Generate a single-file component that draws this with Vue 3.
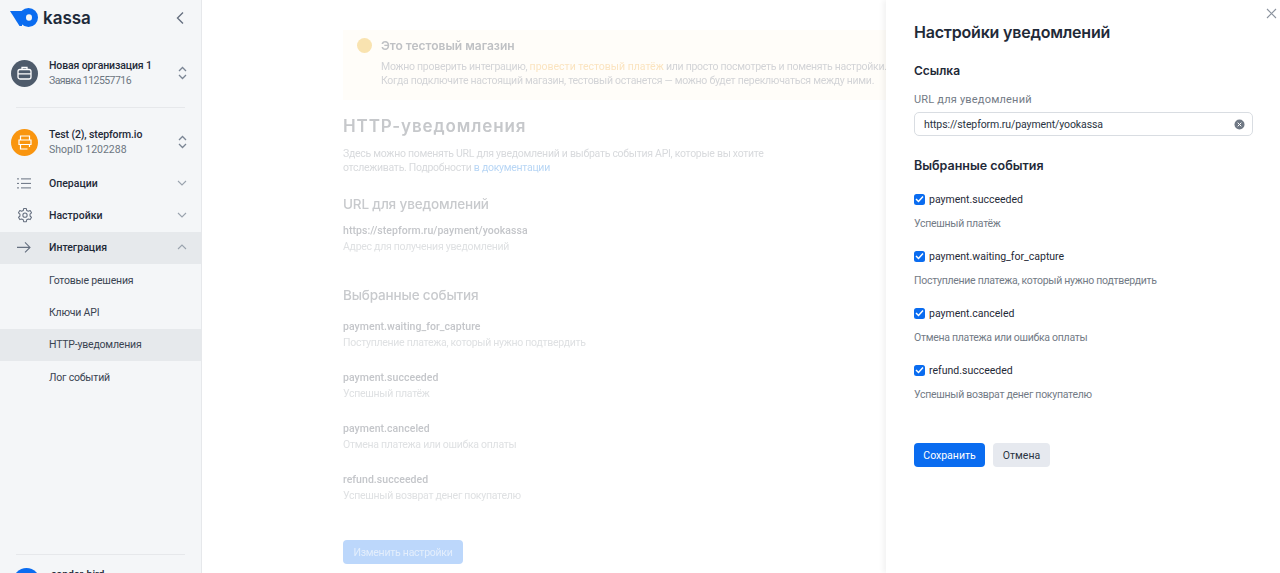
<script setup>
const nav = [
  { label: 'Готовые решения' },
  { label: 'Ключи API' },
  { label: 'HTTP-уведомления', active: true },
  { label: 'Лог событий' },
]
const mainEvents = [
  { name: 'payment.waiting_for_capture', desc: 'Поступление платежа, который нужно подтвердить' },
  { name: 'payment.succeeded', desc: 'Успешный платёж' },
  { name: 'payment.canceled', desc: 'Отмена платежа или ошибка оплаты' },
  { name: 'refund.succeeded', desc: 'Успешный возврат денег покупателю' },
]
const panelEvents = [
  { name: 'payment.succeeded', desc: 'Успешный платёж' },
  { name: 'payment.waiting_for_capture', desc: 'Поступление платежа, который нужно подтвердить' },
  { name: 'payment.canceled', desc: 'Отмена платежа или ошибка оплаты' },
  { name: 'refund.succeeded', desc: 'Успешный возврат денег покупателю' },
]
</script>

<template>
  <div class="app">
    <aside class="sidebar">
      <div class="logo-row">
        <svg class="logo" width="28" height="19" viewBox="0 0 28 19">
          <path d="M0 3h12v15h-2.500z" fill="#0a6cf0" />
          <path fill-rule="evenodd" d="M18.500 0a9.500 9.500 0 1 1 0 19 9.500 9.500 0 0 1 0-19zm.500 6.300a3 3.200 0 1 0 0 6.400 3 3.200 0 0 0 0-6.400z" fill="#0a6cf0" />
        </svg>
        <span class="logo-text">kassa</span>
        <svg class="collapse" width="10" height="14" viewBox="0 0 10 14"><path d="M8 1.500 2.500 7 8 12.500" fill="none" stroke="#667080" stroke-width="1.400" /></svg>
      </div>

      <div class="account org">
        <span class="avatar dark">
          <svg width="15" height="14" viewBox="0 0 15 14" fill="none" stroke="#fff" stroke-width="1.300"><rect x="1" y="3.500" width="13" height="9.500" rx="2" /><path d="M5 3.500V1.500h5v2M1 7.800h13" /></svg>
        </span>
        <div class="account-text">
          <div class="account-name">Новая организация 1</div>
          <div class="account-sub request">Заявка 112557716</div>
        </div>
        <svg class="updown" width="9" height="14" viewBox="0 0 9 14" fill="none" stroke="#7a8594" stroke-width="1.300"><path d="M1 5 4.500 1.500 8 5M1 9l3.500 3.500L8 9" /></svg>
      </div>
      <div class="divider"></div>
      <div class="account shop">
        <span class="avatar orange">
          <svg width="14" height="15" viewBox="0 0 14 15" fill="none" stroke="#fff" stroke-width="1.200"><path d="M2.500 1h9v4h-9zM1 5h12v4.500H1zM2.500 9.500V14h7M11.500 9.500V12" /></svg>
        </span>
        <div class="account-text">
          <div class="account-name">Test (2), stepform.io</div>
          <div class="account-sub">ShopID 1202288</div>
        </div>
        <svg class="updown" width="9" height="14" viewBox="0 0 9 14" fill="none" stroke="#7a8594" stroke-width="1.300"><path d="M1 5 4.500 1.500 8 5M1 9l3.500 3.500L8 9" /></svg>
      </div>

      <nav class="nav">
        <div class="nav-item">
          <svg class="nav-icon" width="14" height="12" viewBox="0 0 14 12" fill="none" stroke="#667080" stroke-width="1"><path d="M0 1.500h2M4 1.500h10M0 6h2M4 6h10M0 10.500h2M4 10.500h10" /></svg>
          <span>Операции</span>
          <svg class="chev" width="10" height="6" viewBox="0 0 10 6" fill="none" stroke="#9aa3ae" stroke-width="1.100"><path d="m1 1 4 4 4-4" /></svg>
        </div>
        <div class="nav-item">
          <svg class="nav-icon" width="16" height="16" viewBox="0 0 24 24" fill="none" stroke="#667080" stroke-width="1.600"><circle cx="12" cy="12" r="3.200" /><path d="M10 2h4l.6 3 2.400 1.200 2.800-1.200 2 3.400-2.300 2 .1 2.800 2.200 2-2 3.400-2.800-1-2.400 1.200-.6 3h-4l-.6-3L7 17.600l-2.800 1-2-3.400 2.200-2V10.400l-2.200-2 2-3.400 2.800 1.200L9.400 5z" stroke-linejoin="round" /></svg>
          <span>Настройки</span>
          <svg class="chev" width="10" height="6" viewBox="0 0 10 6" fill="none" stroke="#9aa3ae" stroke-width="1.100"><path d="m1 1 4 4 4-4" /></svg>
        </div>
        <div class="nav-item open">
          <svg class="nav-icon" width="14" height="12" viewBox="0 0 14 12" fill="none" stroke="#667080" stroke-width="1.100"><path d="M0 6h13M8 1l5 5-5 5" /></svg>
          <span>Интеграция</span>
          <svg class="chev" width="10" height="6" viewBox="0 0 10 6" fill="none" stroke="#9aa3ae" stroke-width="1.100"><path d="m1 5 4-4 4 4" /></svg>
        </div>
        <div v-for="n in nav" :key="n.label" class="sub-item" :class="{ active: n.active }">{{ n.label }}</div>
      </nav>

      <div class="side-bottom">
        <div class="divider"></div>
        <div class="user">
          <span class="avatar blue"></span>
          <span class="account-name">condor-bird</span>
        </div>
      </div>
    </aside>

    <main class="main">
      <div class="content">
        <section class="banner">
          <span class="banner-dot"></span>
          <div class="banner-body">
            <div class="banner-title">Это тестовый магазин</div>
            <p>Можно проверить интеграцию, <span class="orange-link">провести тестовый платёж</span> или просто посмотреть и поменять настройки.</p>
            <p>Когда подключите настоящий магазин, тестовый останется — можно будет переключаться между ними.</p>
          </div>
        </section>
        <h1>HTTP-уведомления</h1>
        <p class="intro">Здесь можно поменять URL для уведомлений и выбрать события API, которые вы хотите отслеживать. Подробности <span class="blue-link">в документации</span></p>
        <h2 class="url-head">URL для уведомлений</h2>
        <div class="field">
          <div class="f-name">https://stepform.ru/payment/yookassa</div>
          <div class="f-desc">Адрес для получения уведомлений</div>
        </div>
        <h2 class="ev-head">Выбранные события</h2>
        <div v-for="e in mainEvents" :key="e.name" class="field ev">
          <div class="f-name">{{ e.name }}</div>
          <div class="f-desc">{{ e.desc }}</div>
        </div>
        <button class="edit-btn">Изменить настройки</button>
      </div>
    </main>

    <section class="panel">
      <svg class="close" width="11" height="11" viewBox="0 0 11 11" fill="none" stroke="#8b939e" stroke-width="1.100"><path d="m1 1 9 9M10 1l-9 9" /></svg>
      <h3 class="panel-title">Настройки уведомлений</h3>
      <h4 class="link-head">Ссылка</h4>
      <label class="input-label">URL для уведомлений</label>
      <div class="input">
        <span>https://stepform.ru/payment/yookassa</span>
        <svg width="11" height="11" viewBox="0 0 11 11"><circle cx="5.500" cy="5.500" r="5" fill="#6f7884" /><path d="m3.700 3.700 3.600 3.600m0-3.600L3.700 7.300" stroke="#fff" stroke-width="1" /></svg>
      </div>
      <h4 class="events-head">Выбранные события</h4>
      <div v-for="e in panelEvents" :key="e.name" class="check-block">
        <div class="check-row">
          <span class="box">
            <svg width="9" height="8" viewBox="0 0 9 8" fill="none" stroke="#fff" stroke-width="1.500"><path d="m1 4 2.500 2.500L8 1.500" /></svg>
          </span>
          <span class="check-name">{{ e.name }}</span>
        </div>
        <div class="check-desc">{{ e.desc }}</div>
      </div>
      <div class="actions">
        <button class="btn primary">Сохранить</button>
        <button class="btn secondary">Отмена</button>
      </div>
    </section>
  </div>
</template>

<style>
html, body { margin: 0; overflow: hidden; background: #fff; }
</style>

<style scoped>
.app {
  display: flex;
  width: 1280px;
  height: 573px;
  overflow: hidden;
  font-family: Roboto, "Noto Sans", sans-serif;
  font-size: 10.500px;
  color: #1f2a38;
  background: #fff;
}
* { box-sizing: border-box; }
h1, h2, h3, h4, p { margin: 0; }

.sidebar {
  width: 202px;
  flex: none;
  height: 573px;
  background: #f4f6f8;
  border-right: 1px solid #e6e8eb;
  display: flex;
  flex-direction: column;
  overflow: hidden;
}
.logo-row { display: flex; align-items: center; height: 35px; padding: 0 16px 0 10px; }
.logo-text { font-family: Inter, sans-serif; font-size: 17px; font-weight: 600; color: #1d2a3a; margin-left: 5px; }
.collapse { margin-left: auto; }
.account { display: flex; align-items: center; padding: 0 14px 0 11px; height: 28px; }
.org { margin-top: 24px; }
.shop { margin-top: 20px; }
.avatar { width: 27px; height: 27px; border-radius: 50%; flex: none; display: flex; align-items: center; justify-content: center; }
.dark { background: #4e5b6b; }
.orange { background: #f9950f; }
.blue { background: #0a6cf0; }
.account-text { margin-left: 11px; flex: 1; padding-top: 1px; }
.account-name { font-size: 10.500px; font-weight: 500; line-height: 14px; color: #1f2a38; letter-spacing: -.12px; }
.account-sub { font-size: 10.500px; line-height: 16px; color: #6d7682; }
.request { letter-spacing: -.55px; }
.divider { height: 1px; background: #e6e8eb; margin: 0 16px; }
.org + .divider { margin-top: 20px; }

.nav { margin-top: 12px; }
.nav-item { position: relative; display: flex; align-items: center; height: 32px; padding: 0 14px 2px 49px; font-weight: 500; }
.nav-item .chev { margin-left: auto; }
.nav-icon { position: absolute; left: 17px; top: 50%; transform: translateY(-55%); }
.open { background: #e6e9ec; }
.sub-item { height: 32.300px; display: flex; align-items: center; padding-left: 49px; color: #3a4452; letter-spacing: -.2px; }
.sub-item.active { background: #e6e9ec; }

.side-bottom { margin-top: auto; height: 19px; flex: none; }
.user { display: flex; align-items: flex-start; gap: 11px; padding: 13px 0 0 13px; height: 40px; }

.main { flex: 1; min-width: 0; overflow: hidden; position: relative; }
.content { padding: 30px 0 0 141px; width: 760px; color: #c5c8cc; filter: blur(.5px); }
.banner { display: flex; width: 640px; padding: 8px 0 0 14px; height: 70px; background: #fffdf9; white-space: nowrap; }
.banner-dot { width: 15px; height: 15px; border-radius: 50%; background: #f9e3b0; flex: none; margin-right: 9px; }
.banner-title { font-family: Inter, sans-serif; font-size: 12px; font-weight: 600; line-height: 16px; color: #bfc1c4; margin-bottom: 6px; }
.banner-body p { line-height: 14px; color: #d3d4d7; letter-spacing: -.28px; }
.orange-link { color: #fbe4c0; letter-spacing: 0; }
h1 { font-family: Inter, sans-serif; font-size: 17px; font-weight: 600; letter-spacing: .9px; line-height: 24px; margin-top: 14px; color: #c6c8cb; }
.intro { width: 430px; margin-top: 9px; line-height: 14px; color: #d8dadd; letter-spacing: -.28px; }
.blue-link { color: #b8d6f5; }
.url-head { font-family: Inter, sans-serif; font-size: 13.500px; font-weight: 500; letter-spacing: -.15px; line-height: 20px; margin-top: 19px; color: #c8cacd; }
.field { margin-top: 9px; }
.f-name { font-weight: 500; line-height: 16px; color: #c4c6ca; letter-spacing: .05px; }
.f-desc { line-height: 15px; color: #dfe1e3; letter-spacing: -.28px; }
.ev-head { font-family: Inter, sans-serif; font-size: 13.500px; font-weight: 500; letter-spacing: -.15px; line-height: 20px; margin-top: 31px; color: #c8cacd; }
.ev { margin-top: 20px; }
.ev-head + .ev { margin-top: 14px; }
.edit-btn { display: block; margin-top: 37px; width: 120px; height: 24px; border: 0; border-radius: 4px; background: #bcd7fb; color: #e3eefc; font: inherit; letter-spacing: -.25px; white-space: nowrap; padding: 0; }

.panel {
  position: relative;
  width: 394px;
  flex: none;
  height: 573px;
  padding: 21px 28px 0;
  background: #fff;
  box-shadow: -3px 0 5px rgba(0, 0, 0, .05);
}
.close { position: absolute; top: 8px; right: 3px; }
.panel-title { font-family: Inter, sans-serif; font-size: 16px; font-weight: 600; letter-spacing: -.2px; line-height: 22px; color: #1f2a38; }
.link-head { font-family: Inter, sans-serif; font-size: 12px; font-weight: 600; line-height: 16px; margin-top: 20px; }
.input-label { display: block; margin-top: 13px; font-size: 11px; letter-spacing: .2px; line-height: 16px; color: #737b86; }
.input { display: flex; align-items: center; justify-content: space-between; width: 339px; height: 24px; margin-top: 4px; padding: 0 7px 0 9px; border: 1px solid #d9dde2; border-radius: 5px; color: #2a3442; letter-spacing: -.1px; }
.events-head { font-family: Inter, sans-serif; font-size: 12.500px; font-weight: 600; line-height: 16px; margin-top: 22px; }
.check-block { margin-top: 16px; }
.events-head + .check-block { margin-top: 17px; }
.check-row { display: flex; align-items: center; gap: 4px; height: 16px; }
.box { width: 11px; height: 11px; border-radius: 2.500px; background: #0a6cf0; display: flex; align-items: center; justify-content: center; }
.check-name { color: #1f2a38; }
.check-desc { margin-top: 9px; line-height: 16px; color: #737b86; letter-spacing: -.28px; }
.actions { display: flex; gap: 8px; margin-top: 40px; }
.btn { height: 24px; border: 0; border-radius: 4px; font: inherit; padding: 0; }
.primary { width: 71px; background: #0a6cf0; color: #fff; }
.secondary { width: 57px; background: #e6e9ef; color: #2a3442; }
</style>
